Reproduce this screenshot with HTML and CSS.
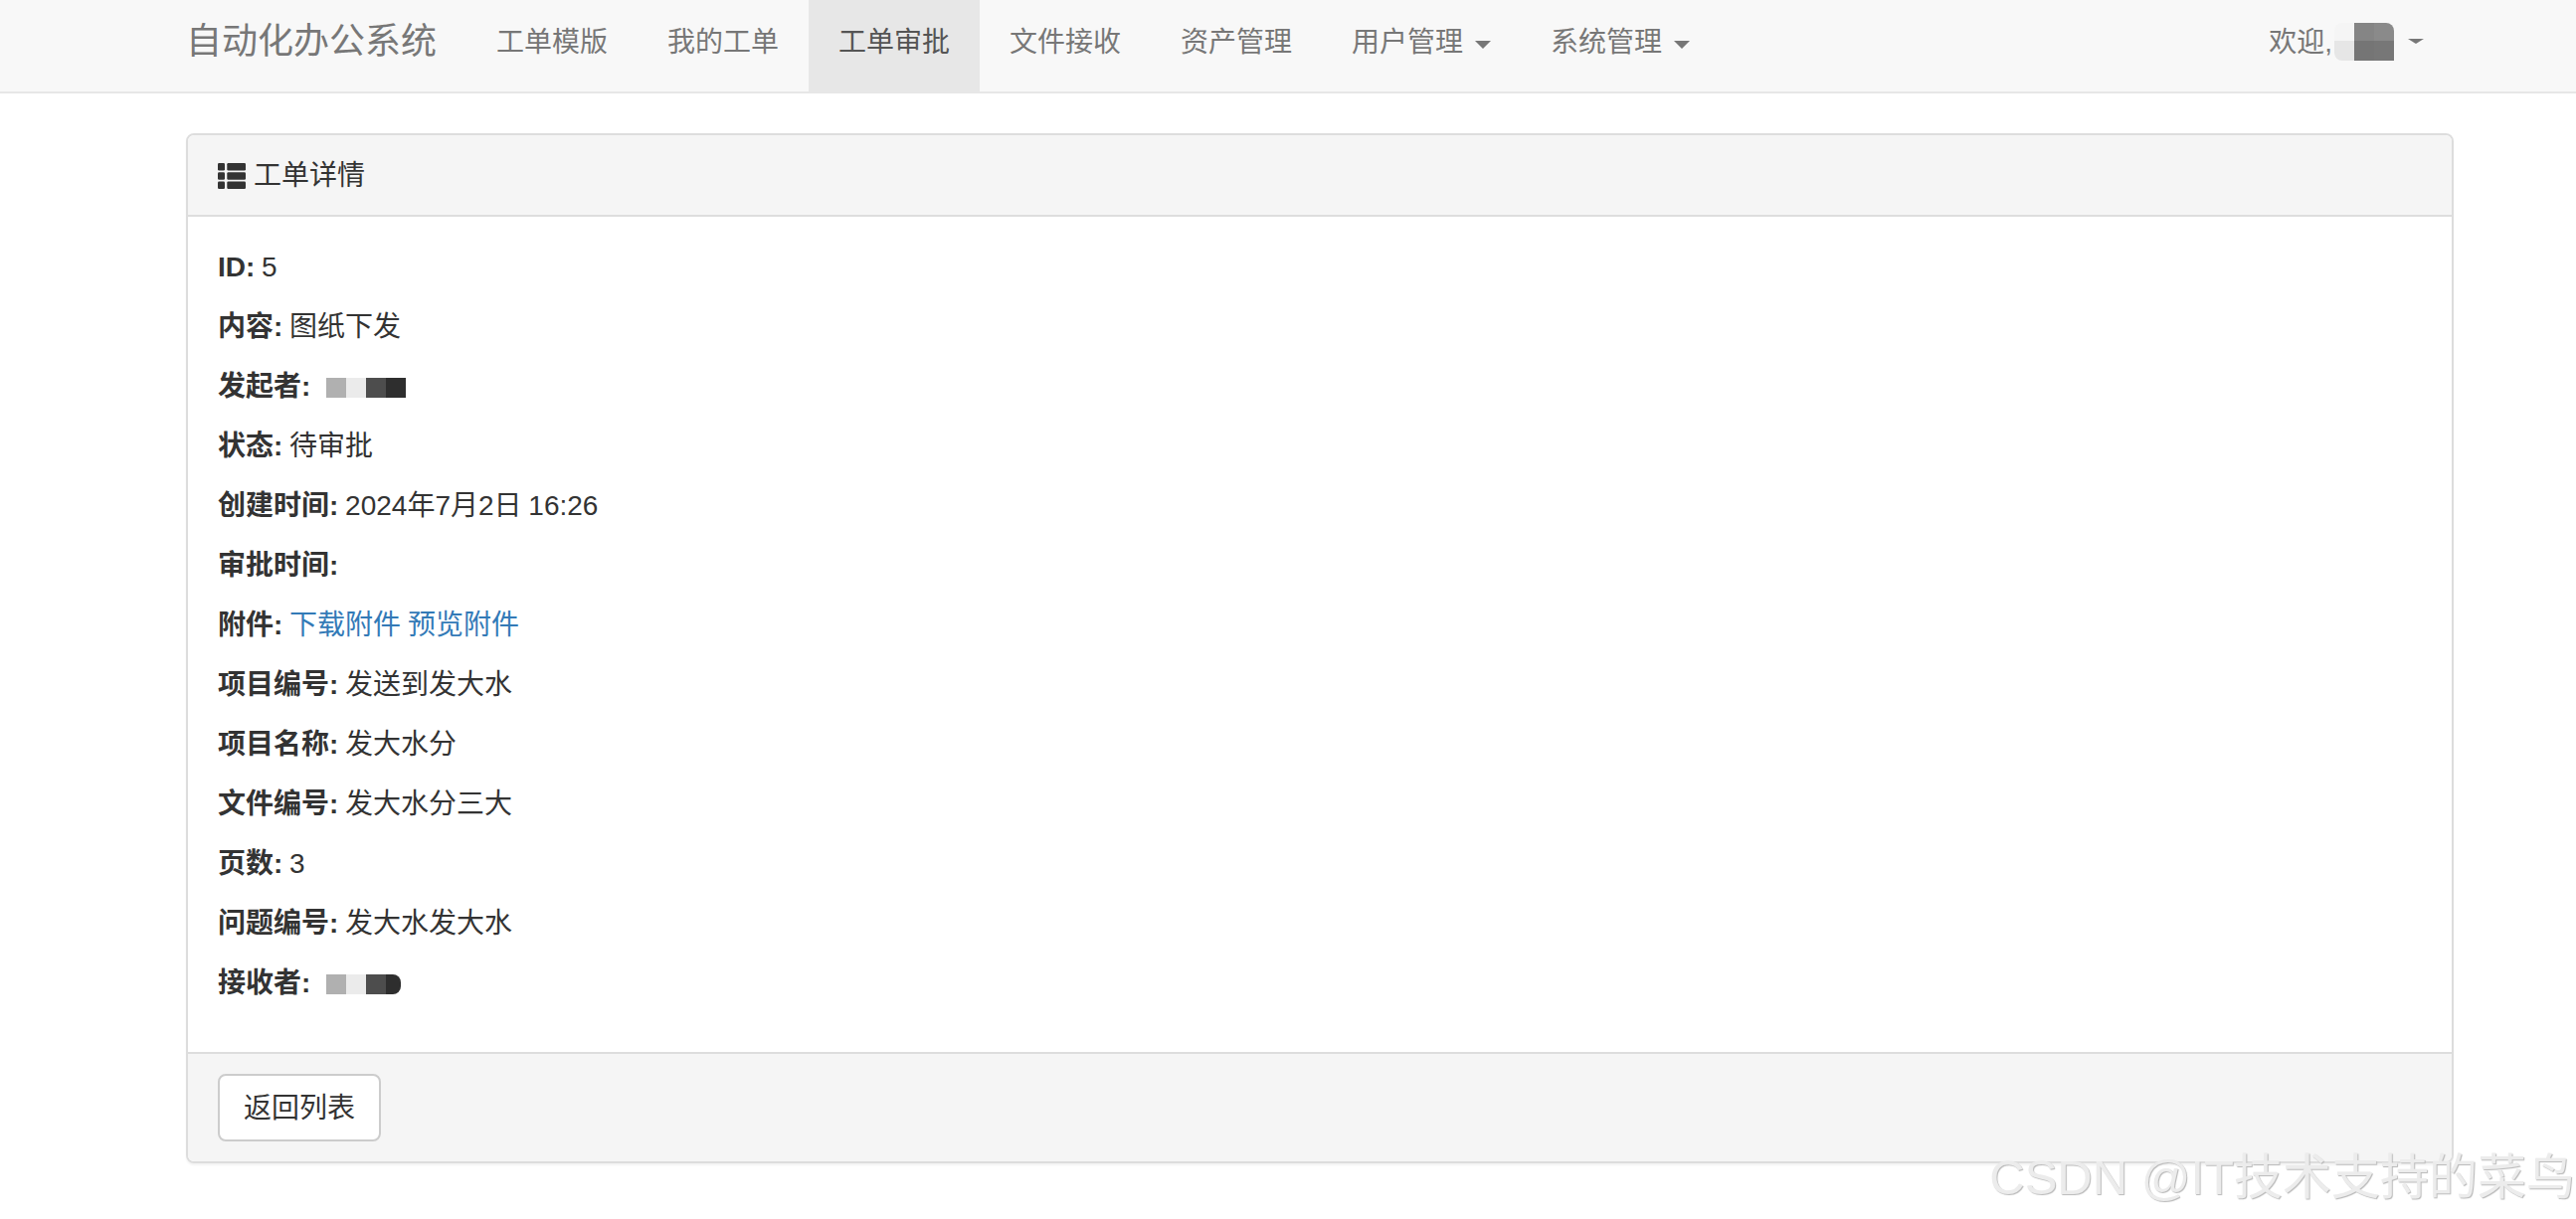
FILE: index.html
```html
<!DOCTYPE html>
<html lang="zh-CN">
<head>
<meta charset="utf-8">
<title>工单详情</title>
<link rel="stylesheet" href="styles.css">
</head>
<body>
<nav class="navbar">
  <div class="wrap navbar-inner">
    <a class="brand" href="#">自动化办公系统</a>
    <ul class="nav">
      <li><a href="#">工单模版</a></li>
      <li><a href="#">我的工单</a></li>
      <li class="active"><a href="#">工单审批</a></li>
      <li><a href="#">文件接收</a></li>
      <li><a href="#">资产管理</a></li>
      <li><a href="#">用户管理<span class="caret"></span></a></li>
      <li><a href="#">系统管理<span class="caret"></span></a></li>
    </ul>
    <a class="user" href="#">欢迎,<span class="blur-user"><i class="u1"></i><i class="u2"></i><i class="u3"></i><i class="u4"></i><i class="u5"></i><i class="u6"></i></span><span class="caret caret-user"></span></a>
  </div>
</nav>
<main class="wrap">
  <section class="panel">
    <header class="panel-heading">
      <svg class="icon-list" viewBox="0 0 28 26" aria-hidden="true">
        <rect x="0" y="0" width="7" height="7.4" rx="1.2"/>
        <rect x="9.3" y="0" width="18.7" height="7.4" rx="1.2"/>
        <rect x="0" y="9.3" width="7" height="7.4" rx="1.2"/>
        <rect x="9.3" y="9.3" width="18.7" height="7.4" rx="1.2"/>
        <rect x="0" y="18.6" width="7" height="7.4" rx="1.2"/>
        <rect x="9.3" y="18.6" width="18.7" height="7.4" rx="1.2"/>
      </svg>
      <span>工单详情</span>
    </header>
    <div class="panel-body">
      <p><strong>ID:</strong> 5</p>
      <p><strong>内容:</strong> 图纸下发</p>
      <p><strong>发起者:</strong> <span class="mosaic"><i class="m1"></i><i class="m2"></i><i class="m3"></i><i class="m4"></i></span></p>
      <p><strong>状态:</strong> 待审批</p>
      <p><strong>创建时间:</strong> 2024年7月2日 16:26</p>
      <p><strong>审批时间:</strong></p>
      <p><strong>附件:</strong> <a href="#">下载附件</a> <a href="#">预览附件</a></p>
      <p><strong>项目编号:</strong> 发送到发大水</p>
      <p><strong>项目名称:</strong> 发大水分</p>
      <p><strong>文件编号:</strong> 发大水分三大</p>
      <p><strong>页数:</strong> 3</p>
      <p><strong>问题编号:</strong> 发大水发大水</p>
      <p><strong>接收者:</strong> <span class="mosaic mosaic-short"><i class="m1"></i><i class="m2"></i><i class="m3"></i><i class="m4"></i></span></p>
    </div>
    <footer class="panel-footer">
      <a class="btn" href="#">返回列表</a>
    </footer>
  </section>
</main>
<div class="watermark">CSDN @IT技术支持的菜鸟</div>
</body>
</html>
```
FILE: styles.css
```css
* { box-sizing: border-box; }
html, body { height: 100%; }
body {
  margin: 0;
  overflow: hidden;
  background: #fff;
  color: #333;
  font-family: "Liberation Sans", "Noto Sans CJK SC", sans-serif;
  font-size: 28px;
  line-height: 40px;
}
a { text-decoration: none; color: inherit; }
.wrap { width: 2280px; margin-left: 187px; }

.navbar {
  height: 94px;
  background: #f8f8f8;
  border-bottom: 2px solid #e7e7e7;
  margin-bottom: 40px;
}
.navbar-inner { display: flex; height: 92px; }
.brand {
  padding: 0 30px 0 0;
  font-size: 36px;
  line-height: 84px;
  color: #777;
}
.nav {
  display: flex;
  list-style: none;
  margin: 0;
  padding: 0;
}
.nav a {
  display: block;
  height: 92px;
  padding: 0 30px;
  line-height: 86px;
  color: #777;
}
.nav .active a { background: #e7e7e7; color: #555; }
.caret {
  display: inline-block;
  width: 0;
  height: 0;
  margin-left: 12px;
  vertical-align: middle;
  border-top: 8px solid #777;
  border-left: 8px solid transparent;
  border-right: 8px solid transparent;
}
.user {
  display: flex;
  align-items: center;
  height: 86px;
  margin-left: auto;
  padding-right: 30px;
  color: #777;
}
.blur-user {
  display: grid;
  grid-template-columns: repeat(3, 20px);
  grid-template-rows: 18px 20px;
  margin-left: 2px;
  margin-top: -2px;
}
.blur-user i { display: block; }
.u1 { background: #f5f5f5; border-radius: 8px 0 0 0; }
.u2 { background: #858585; }
.u3 { background: #8a8a8a; border-radius: 0 8px 0 0; }
.u4 { background: #e6e6e6; border-radius: 0 0 0 8px; }
.u5 { background: #757575; }
.u6 { background: #777; }
.caret-user { margin-left: 14px; border-top-width: 5px; margin-top: -4px; }

.panel {
  background: #fff;
  border: 2px solid #ddd;
  border-radius: 8px;
  box-shadow: 0 2px 2px rgba(0, 0, 0, .05);
}
.panel-heading {
  display: flex;
  align-items: center;
  gap: 8px;
  height: 82px;
  padding: 2px 30px 0;
  background: #f5f5f5;
  border-bottom: 2px solid #ddd;
  border-radius: 6px 6px 0 0;
}
.icon-list { width: 28px; height: 26px; fill: #333; flex: none; }
.panel-body { padding: 31px 30px 29px; word-spacing: -1px; }
.panel-body p { margin: 0 0 20px; }
.panel-body p:last-child { margin-bottom: 0; padding-bottom: 20px; }
.panel-body a { color: #337ab7; }
.mosaic {
  display: inline-flex;
  vertical-align: middle;
  margin-left: 9px;
  margin-top: -1px;
}
.mosaic i { display: block; width: 20px; height: 20px; }
.m1 { background: #b0b0b0; }
.m2 { background: #ebebeb; }
.m3 { background: #4d4d4d; }
.m4 { background: #2e2e2e; }
.mosaic-short .m4 { width: 15px; border-radius: 0 8px 8px 0; }
.panel-footer {
  height: 110px;
  padding: 20px 30px;
  background: #f5f5f5;
  border-top: 2px solid #ddd;
  border-radius: 0 0 6px 6px;
}
.btn {
  display: inline-block;
  padding: 13px 24px 11px;
  background: #fff;
  border: 2px solid #ccc;
  border-radius: 8px;
  color: #333;
}
.watermark {
  position: absolute;
  right: 1px;
  top: 1154px;
  font-size: 49px;
  line-height: 60px;
  white-space: nowrap;
  color: #ececec;
  text-shadow: 1px 1px 1px #b8b8b8;
}
```
